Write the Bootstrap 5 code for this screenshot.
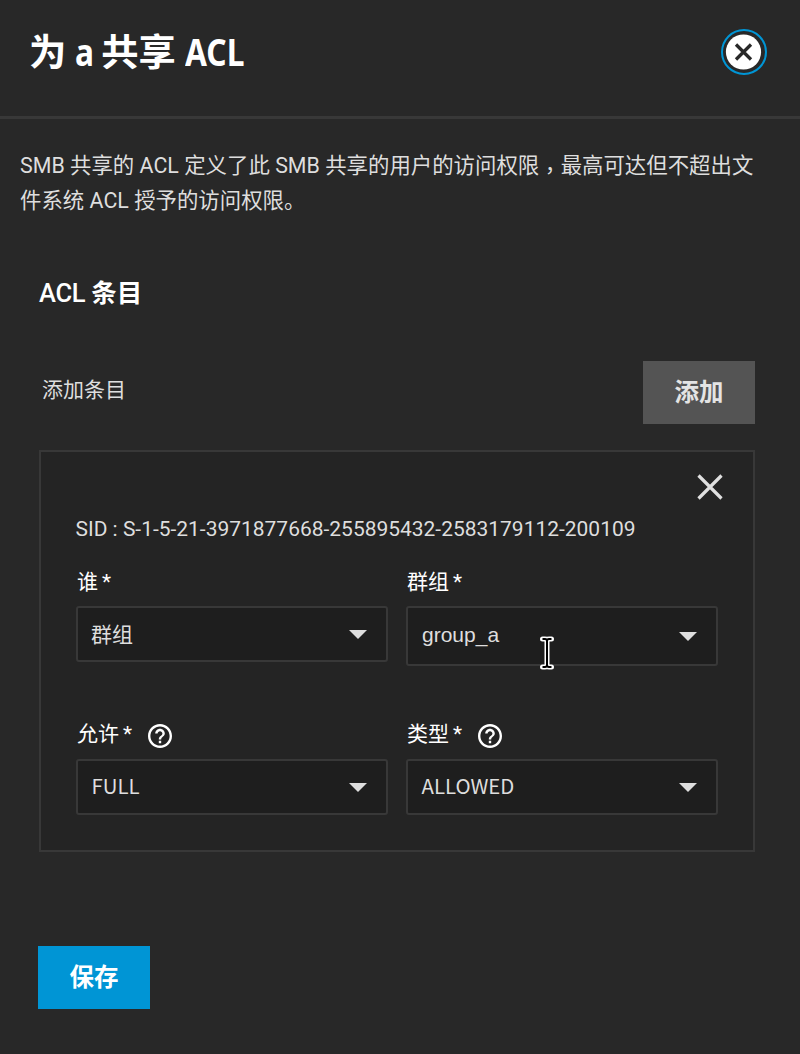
<!DOCTYPE html>
<html lang="zh-CN" data-bs-theme="dark">
<head>
<meta charset="utf-8">
<meta name="viewport" content="width=device-width, initial-scale=1">
<title>ACL</title>
<link href="https://cdn.jsdelivr.net/npm/bootstrap@5.3.0/dist/css/bootstrap.min.css" rel="stylesheet">
<style>
  body { background: #282828; color: #dedede; font: 21.42px/35px Roboto, "Noto Sans CJK SC", sans-serif; min-height: 1054px; overflow: hidden; }
  .panel-head { height: 119px; border-bottom: 3px solid #383838; padding: 0 33px 13px 29px; }
  .panel-title { font-size: 37.3px; line-height: 48px; font-weight: 700; padding-top: 1px; }
  .title-latin { font-family: "Noto Sans", sans-serif; display: inline-block; transform: scaleX(.85); transform-origin: left; }
  .title-letter { margin: 0 -5px 0 -1px; }
  .round-close { width: 46px; height: 46px; }
  .intro { padding: 29px 40px 0 20px; }
  .comma { font-family: "Noto Sans CJK TC", sans-serif; vertical-align: -5px; line-height: 1; }
  .section-title { font-size: 25.5px; line-height: 36px; font-weight: 500; margin: 57px 0 0 39px; letter-spacing: -.3px; }
  .section-title .cjk { font-weight: 700; letter-spacing: 0; }
  .add-row { margin: 50px 45px 0 42px; height: 63px; }
  .add-label { font-size: 21px; line-height: 59px; }
  .btn-flat { --bs-btn-border-radius: 0; --bs-btn-border-width: 0; --bs-btn-padding-x: 0; --bs-btn-padding-y: 0; width: 112px; height: 63px; font: 700 24.5px/63px Roboto, "Noto Sans CJK SC", sans-serif; }
  .btn-add { --bs-btn-bg: #545454; --bs-btn-color: #e4e4e4; }
  .btn-save { --bs-btn-bg: #0095d5; --bs-btn-color: #fff; margin: 94px 0 0 38px; }
  .entry { margin: 26px 45px 0 39px; height: 402px; border: 2px solid #383838; background: #242424; padding: 22px 35px 0; }
  .entry-close { height: 26px; margin-right: -5px; }
  .sid { font-size: 20.98px; line-height: 30px; margin: 14px 0 23px -.5px; }
  .fields { display: grid; grid-template-columns: 312px 312px; column-gap: 18px; }
  .fields-lower { margin-top: 53px; }
  .field-label { color: #fff; font-size: 21px; line-height: 30px; height: 30px; padding-left: 1px; gap: 4px; margin-bottom: 9px; }
  .fields-lower .field-label { margin-bottom: 10px; }
  .field-label svg { margin: 5px 0 0 12px; }
  .pick { height: 56px; border: 2px solid #383838; border-radius: 3px; background: #1e1e1e; font-size: 21px; padding: 0 19px 0 13px; }
  .pick-tall { height: 60px; padding-left: 14px; }
  .pick-cjk { font-family: "Noto Sans CJK SC", sans-serif; }
  .pick-cjk span { padding-bottom: 2px; }
  .pick-code { font-size: 20.4px; padding-left: 13.5px; }
  .pick-code span { padding-bottom: 3px; }
  .pick-arial { font-family: "Liberation Sans", sans-serif; }
  .pick-arial span { padding-bottom: 4px; }
  .text-cursor { position: absolute; left: 540px; top: 636px; }
</style>
<script src="https://cdn.jsdelivr.net/npm/bootstrap@5.3.0/dist/js/bootstrap.bundle.min.js"></script>
</head>
<body class="position-relative">
<svg class="d-none">
  <symbol id="help" viewBox="2 2 20 20"><path fill="#fff" d="M11 18h2v-2h-2v2zm1-16C6.480 2 2 6.480 2 12s4.480 10 10 10 10-4.480 10-10S17.520 2 12 2zm0 18c-4.410 0-8-3.590-8-8s3.590-8 8-8 8 3.590 8 8-3.590 8-8 8zm0-14c-2.210 0-4 1.790-4 4h2c0-1.100.9-2 2-2s2 .9 2 2c0 2-3 1.750-3 5h2c0-2.250 3-2.500 3-5 0-2.210-1.790-4-4-4z"/></symbol>
  <symbol id="caret" viewBox="0 0 18 9"><path d="M0 0H18L9 9Z" fill="#dedede"/></symbol>
</svg>
<header class="panel-head d-flex align-items-center justify-content-between">
  <h1 class="panel-title text-white m-0">为 <span class="title-latin title-letter">a</span> 共享 <span class="title-latin">ACL</span></h1>
  <svg class="round-close" viewBox="0 0 46 46"><circle cx="23" cy="23" r="22" fill="none" stroke="#0095d5" stroke-width="2"/><circle cx="22.5" cy="23" r="17.6" fill="#fff"/><path d="M15 15.500 30 30.500M30 15.500 15 30.500" stroke="#282828" stroke-width="3.3"/></svg>
</header>
<main>
  <p class="intro m-0">SMB 共享的 ACL 定义了此 SMB 共享的用户的访问权限<span class="comma" lang="zh-TW">，</span>最高可达但不超出文<br>件系统 ACL 授予的访问权限。</p>
  <h2 class="section-title text-white mb-0">ACL <span class="cjk">条目</span></h2>
  <div class="add-row d-flex justify-content-between">
    <span class="add-label">添加条目</span>
    <button type="button" class="btn btn-flat btn-add">添加</button>
  </div>
  <section class="entry">
    <div class="entry-close d-flex justify-content-end"><svg width="26" height="26" viewBox="0 0 26 26"><path d="M1.500 1.500 24.500 24.500M24.500 1.500 1.500 24.500" stroke="#e0e0e0" stroke-width="3.2"/></svg></div>
    <div class="sid">SID : S-1-5-21-3971877668-255895432-2583179112-200109</div>
    <div class="fields">
      <div>
        <div class="field-label d-flex"><span>谁</span><span>*</span></div>
        <div class="pick pick-cjk d-flex align-items-center justify-content-between"><span>群组</span><svg width="18" height="9"><use href="#caret"/></svg></div>
      </div>
      <div>
        <div class="field-label d-flex"><span>群组</span><span>*</span></div>
        <div class="pick pick-tall pick-arial d-flex align-items-center justify-content-between"><span>group_a</span><svg width="18" height="9"><use href="#caret"/></svg></div>
      </div>
    </div>
    <div class="fields fields-lower">
      <div>
        <div class="field-label d-flex"><span>允许</span><span>*</span><svg width="24" height="24"><use href="#help"/></svg></div>
        <div class="pick pick-cjk pick-code d-flex align-items-center justify-content-between"><span>FULL</span><svg width="18" height="9"><use href="#caret"/></svg></div>
      </div>
      <div>
        <div class="field-label d-flex"><span>类型</span><span>*</span><svg width="24" height="24"><use href="#help"/></svg></div>
        <div class="pick pick-cjk pick-code d-flex align-items-center justify-content-between"><span>ALLOWED</span><svg width="18" height="9"><use href="#caret"/></svg></div>
      </div>
    </div>
  </section>
  <button type="button" class="btn btn-flat btn-save">保存</button>
</main>
<svg class="text-cursor" width="14" height="34" viewBox="0 0 14 34"><path d="M2.500 3H5Q7 3 7 5Q7 3 9 3H11.500M7 4V30M2.500 31H5Q7 31 7 29Q7 31 9 31H11.500" fill="none" stroke="#fff" stroke-width="5" stroke-linejoin="round" stroke-linecap="round"/><path d="M2.500 3H5Q7 3 7 5Q7 3 9 3H11.500M7 4V30M2.500 31H5Q7 31 7 29Q7 31 9 31H11.500" fill="none" stroke="#000" stroke-width="2"/></svg>
</body>
</html>
